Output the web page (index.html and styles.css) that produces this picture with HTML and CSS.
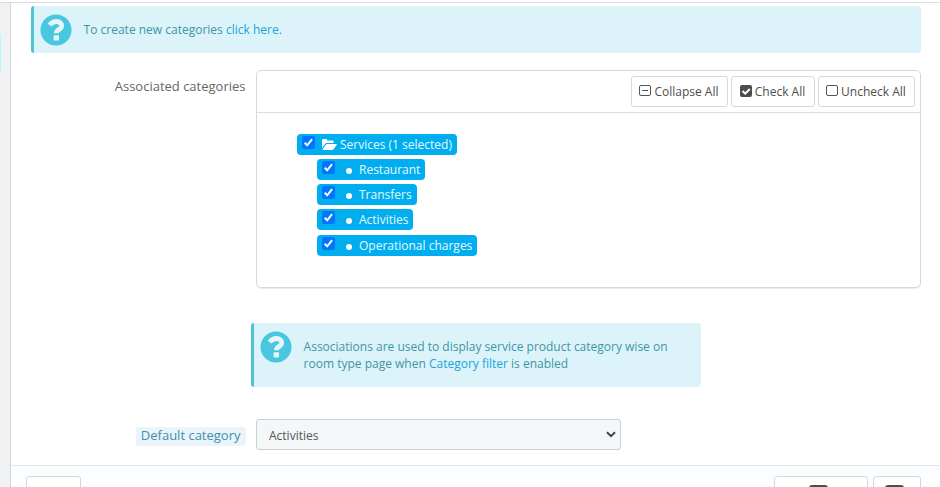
FILE: index.html
```
<!DOCTYPE html>
<html lang="en">
<head>
<meta charset="utf-8">
<title>Associations</title>
<link rel="stylesheet" href="styles.css">
</head>
<body>
<div class="topline"></div>
<div class="layout">
  <aside class="rail"><div class="rail-marker"></div></aside>
  <main class="panel">
    <div class="alert alert-top">
      <svg class="help" viewBox="0 0 32 32"><circle cx="16" cy="16" r="15.500" fill="#4ac7e0"/><path d="M9.600 11.100C11.600 8.400 13.800 7.500 16.300 7.500c3.500 0 5.400 1.900 5.400 4.200 0 3.900-5.400 3.800-5.400 7.500" fill="none" stroke="#e4f7fb" stroke-width="4.800"/><rect x="13.600" y="21.300" width="5.400" height="5.200" rx=".5" fill="#e4f7fb"/></svg>
      <p>To create new categories <a>click here.</a></p>
    </div>
    <div class="row">
      <label class="name">Associated categories</label>
      <section class="tree-box">
        <header class="tree-bar">
          <button class="btn"><svg class="bi" viewBox="0 0 12 12"><rect x=".5" y=".5" width="11" height="10" rx="1.500" fill="none" stroke="#555"/><path d="M3 5.500h6" stroke="#555"/></svg>Collapse All</button>
          <button class="btn"><svg class="bi" viewBox="0 0 12 12"><rect width="12" height="12" rx="2" fill="#4d4d4d"/><path d="M2.500 6l2.700 2.700L9.800 4" fill="none" stroke="#fff" stroke-width="2"/></svg>Check All</button>
          <button class="btn"><svg class="bi" viewBox="0 0 12 12"><rect x=".5" y=".5" width="11" height="10" rx="1.500" fill="none" stroke="#555"/></svg>Uncheck All</button>
        </header>
        <ul class="tree">
          <li><span class="node root"><svg class="cb" viewBox="0 0 13 13"><rect width="13" height="13" rx="2" fill="#0075ff"/><path d="M2.700 6.800l2.500 2.500L10.100 3.200" fill="none" stroke="#fff" stroke-width="2"/></svg><svg class="folder" viewBox="0 0 15 11"><path d="M0 9V1.200Q0 0 1.200 0H4Q5.200 0 5.200 1.200v.4h5.200q1.200 0 1.200 1.200v1.300H5Q3.700 4.100 2.900 5.100z" fill="#fff"/><path d="M.5 10.500l3-4.400q.7-1 1.700-1h9.200q.8 0 .3.800l-2.900 4.200q-.6.900-1.700.9H1Q.2 11 .5 10.500z" fill="#fff"/></svg>Services (1 selected)</span></li>
          <li><span class="node"><svg class="cb" viewBox="0 0 13 13"><rect width="13" height="13" rx="2" fill="#0075ff"/><path d="M2.700 6.800l2.500 2.500L10.100 3.200" fill="none" stroke="#fff" stroke-width="2"/></svg><i class="dot"></i>Restaurant</span></li>
          <li><span class="node"><svg class="cb" viewBox="0 0 13 13"><rect width="13" height="13" rx="2" fill="#0075ff"/><path d="M2.700 6.800l2.500 2.500L10.100 3.200" fill="none" stroke="#fff" stroke-width="2"/></svg><i class="dot"></i>Transfers</span></li>
          <li><span class="node"><svg class="cb" viewBox="0 0 13 13"><rect width="13" height="13" rx="2" fill="#0075ff"/><path d="M2.700 6.800l2.500 2.500L10.100 3.200" fill="none" stroke="#fff" stroke-width="2"/></svg><i class="dot"></i>Activities</span></li>
          <li><span class="node"><svg class="cb" viewBox="0 0 13 13"><rect width="13" height="13" rx="2" fill="#0075ff"/><path d="M2.700 6.800l2.500 2.500L10.100 3.200" fill="none" stroke="#fff" stroke-width="2"/></svg><i class="dot"></i>Operational charges</span></li>
        </ul>
      </section>
    </div>
    <div class="alert alert-info">
      <svg class="help" viewBox="0 0 32 32"><circle cx="16" cy="16" r="15.500" fill="#4ac7e0"/><path d="M9.600 11.100C11.600 8.400 13.800 7.500 16.300 7.500c3.500 0 5.400 1.900 5.400 4.200 0 3.900-5.400 3.800-5.400 7.500" fill="none" stroke="#e4f7fb" stroke-width="4.800"/><rect x="13.600" y="21.300" width="5.400" height="5.200" rx=".5" fill="#e4f7fb"/></svg>
      <p>Associations are used to display service product category wise on<br>room type page when <a>Category filter</a> is enabled</p>
    </div>
    <div class="row row-select">
      <label class="name"><span class="hint">Default category</span></label>
      <div class="select"><span>Activities</span><svg class="caret" viewBox="0 0 10 7"><path d="M1 1.200l4 4 4-4" fill="none" stroke="#444" stroke-width="2"/></svg></div>
    </div>
    <footer class="footer">
      <div class="fbtn cancel"></div>
      <div class="fbtn save"><i class="disk"></i></div>
      <div class="fbtn stay"><i class="disk"></i></div>
    </footer>
  </main>
</div>
</body>
</html>
```
FILE: styles.css
```
* { box-sizing: border-box; }
body {
  margin: 0;
  height: 487px;
  overflow: hidden;
  background: #fff;
  color: #555;
  font: 12px/17px "Open Sans", sans-serif;
}
p, ul { margin: 0; padding: 0; }
.topline { height: 3px; border-bottom: 1px solid #d9dddf; }
.layout { display: flex; height: 484px; }
.rail { width: 10px; background: #eff1f2; padding-top: 31px; }
.rail-marker { width: 1px; height: 38px; background: #b5f8ff; }
.panel {
  flex: 1;
  display: flex;
  flex-direction: column;
  border-left: 1px solid #d3d8db;
  padding-top: 3px;
}
.alert {
  display: flex;
  flex: none;
  background: #dcf3f9;
  border-left: 3px solid #4fc3d3;
  border-radius: 3px;
  color: #3c96a8;
}
.alert a { color: #17a5dc; }
.help { width: 32px; height: 32px; flex: none; }
.alert-top { height: 47px; margin: 0 19px 0 20px; padding: 8px 6px; }
.alert p { margin: 7px 0 0 11.6px; }
.alert-info { width: 450px; height: 64px; margin: 35px 0 0 240px; padding: 8px 6px; }
.alert-info p { white-space: nowrap; }
.row { display: flex; flex: none; margin: 17px 19px 0 0; }
.name {
  width: 234.5px;
  margin-right: 10.5px;
  padding-top: 8px;
  text-align: right;
  font-size: 13px;
  color: #666;
}
.tree-box {
  flex: 1;
  height: 218px;
  border: 1px solid #d6d9db;
  border-radius: 5px;
  box-shadow: 0 1px 1px rgba(0, 0, 0, .08);
}
.tree-bar {
  display: flex;
  justify-content: flex-end;
  gap: 3px;
  height: 42px;
  padding: 5px 5px 0 0;
  border-bottom: 1px solid #dcdfe0;
}
.btn {
  display: flex;
  align-items: center;
  justify-content: center;
  width: 97px;
  height: 31px;
  padding: 0 1px 0 0;
  background: #fff;
  border: 1px solid #d6d9db;
  border-radius: 3px;
  color: #4d4d4d;
  font: 12px/17px "Open Sans", sans-serif;
}
.btn:nth-child(2) { width: 84px; }
.bi { width: 12px; height: 12px; margin: 0 3px 1px 0; }
.tree { padding: 21px 0 0 40px; list-style: none; }
.tree li { height: 25px; }
.tree li:last-child { margin-top: 1px; }
.node {
  display: inline-flex;
  align-items: center;
  height: 21px;
  margin-left: 20px;
  padding: 0 5px;
  border-radius: 4px;
  background: #00aeef;
  color: #e6f9ff;
  vertical-align: top;
}
.node.root { margin-left: 0; }
.cb { width: 13px; height: 13px; margin-bottom: 4px; }
.folder { width: 15px; height: 11px; margin: 0 3px 1px 7px; }
.dot { width: 6px; height: 6px; margin: 3px 7px 0 11px; border-radius: 50%; background: #fff; }
.row-select { margin-top: 32px; }
.hint {
  display: inline-block;
  height: 19px;
  padding: 0 5px;
  border-radius: 3px;
  background: #e9f5fb;
  color: #448eab;
}
.select {
  display: flex;
  align-items: center;
  justify-content: space-between;
  width: 365px;
  height: 31px;
  padding: 1px 4px 0 12px;
  border: 1px solid #c3d2d8;
  border-radius: 3px;
  background: #f4f7f8;
}
.caret { width: 10px; height: 7px; margin-bottom: 2px; }
.footer {
  display: flex;
  flex: 1;
  margin-top: 15px;
  padding: 10px 19px 0 15px;
  border-top: 1px solid #e2e7ea;
  background: #fcfdfe;
}
.fbtn {
  display: flex;
  justify-content: center;
  height: 40px;
  padding-top: 8px;
  border: 1px solid #d6d9db;
  border-radius: 3px;
  background: #fff;
}
.cancel { width: 55px; margin-right: auto; }
.save { width: 94px; margin-right: 5px; }
.stay { width: 48px; }
.disk { width: 19px; height: 19px; margin-right: 5px; border-radius: 3px; background: #4d4d4d; }
```
